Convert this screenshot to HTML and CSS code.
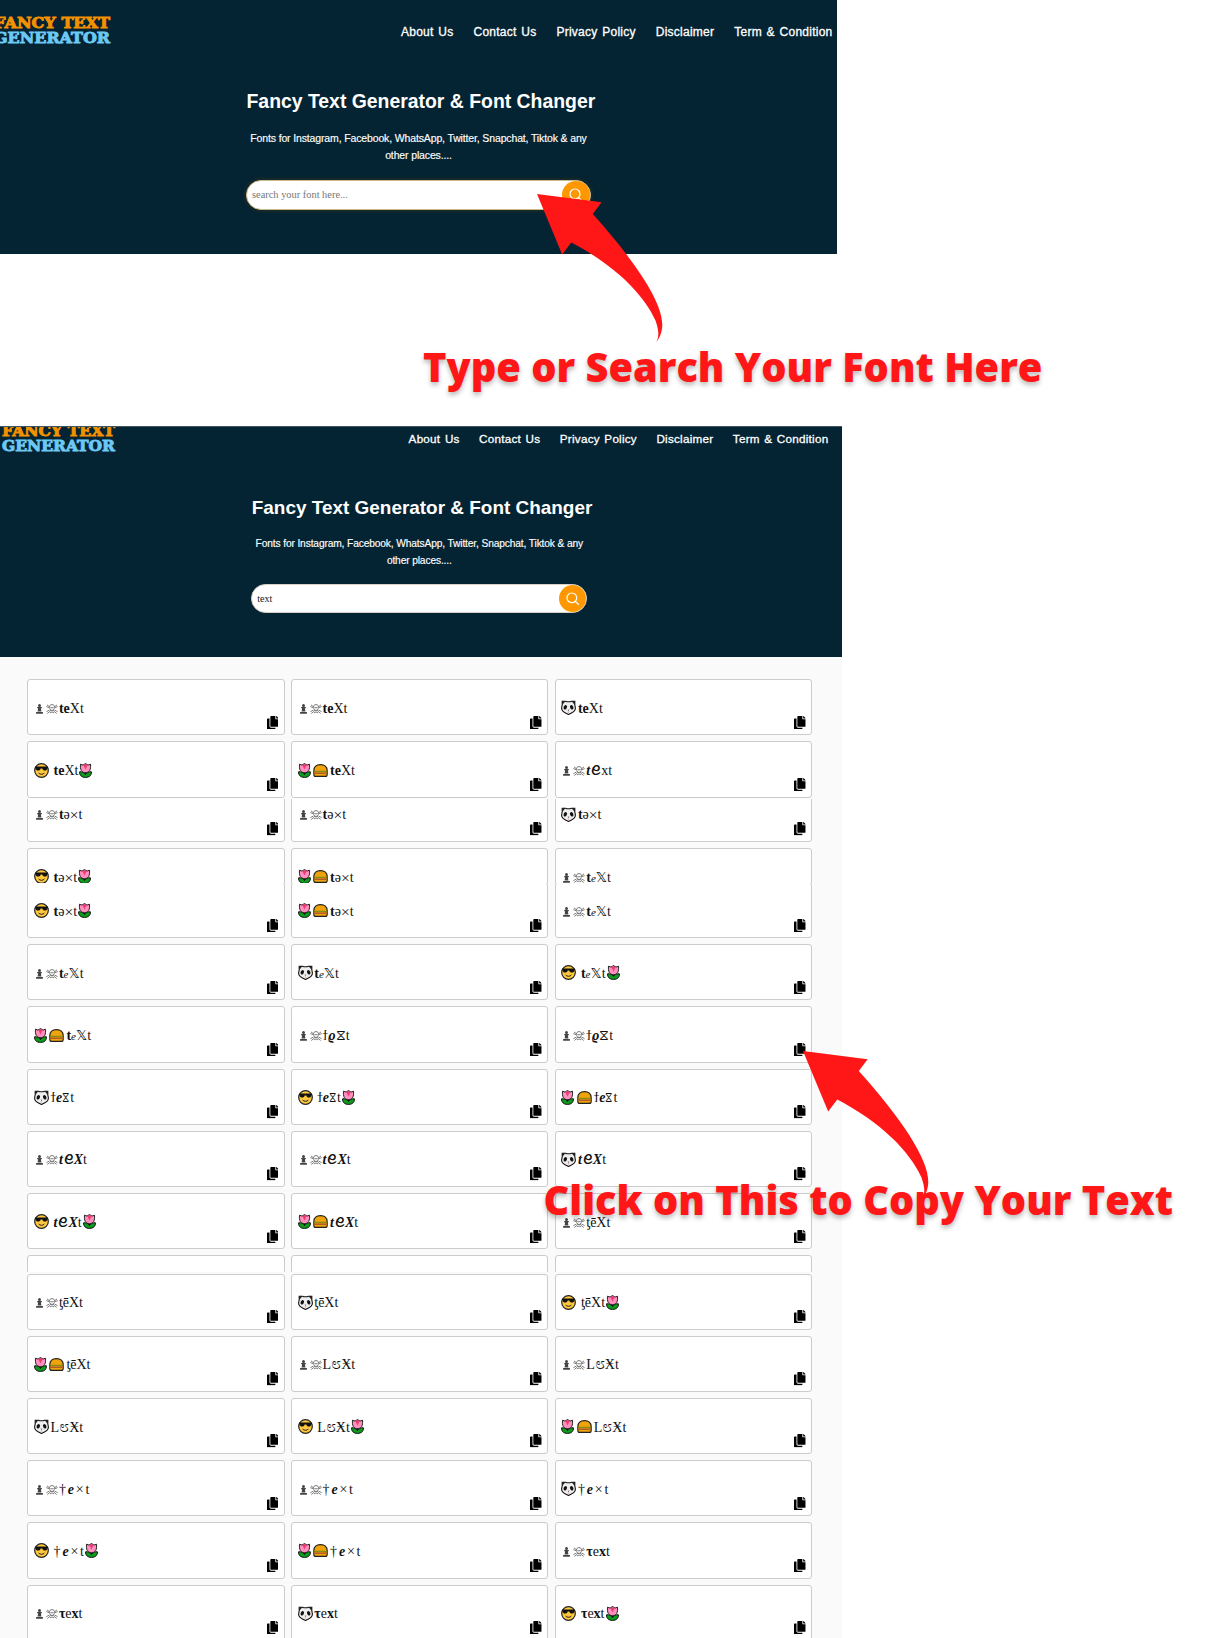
FILE: index.html
```html
<!DOCTYPE html>
<html lang="en">
<head>
<meta charset="utf-8">
<title>Fancy Text Generator &amp; Font Changer</title>
<link rel="stylesheet" href="styles.css">
</head>
<body>
<svg class="defs" aria-hidden="true">
  <symbol id="copy" viewBox="0 0 448 512"><path d="M320 448v40c0 13.255-10.745 24-24 24H24c-13.255 0-24-10.745-24-24V120c0-13.255 10.745-24 24-24h72v296c0 30.879 25.121 56 56 56h168zm0-344V0H152c-13.255 0-24 10.745-24 24v368c0 13.255 10.745 24 24 24h272c13.255 0 24-10.745 24-24V128H344c-13.2 0-24-10.8-24-24zm120.971-31.029L375.029 7.029A24 24 0 0 0 358.059 0H352v96h96v-6.059a24 24 0 0 0-7.029-16.97z"/></symbol>
  <symbol id="search" viewBox="0 0 14 14"><circle cx="6" cy="6" r="5" fill="none" stroke="#fff" stroke-width="1.2"/><path d="M9.7 9.7l3.4 3.4" stroke="#fff" stroke-width="1.300" stroke-linecap="round"/></symbol>
  <symbol id="cool" viewBox="0 0 15 15"><circle cx="7.5" cy="7.5" r="6.8" fill="#ffc83d" stroke="#222" stroke-width="1.200"/><path d="M1 3.500h13v1.200l-.6.6c-.3 1.600-1 2.300-2.400 2.300-1.600 0-2.300-.8-2.700-2.200H6.700C6.300 6.800 5.600 7.600 4 7.600c-1.400 0-2.100-.7-2.400-2.300L1 4.700z" fill="#111"/><path d="M4.600 10c1.400 1.700 4.400 1.700 5.800 0" fill="none" stroke="#222" stroke-width="1"/></symbol>
  <symbol id="tulip" viewBox="0 0 13 15"><path d="M6.500 8v6" stroke="#111" stroke-width="1.600"/><path d="M.6 8.800c2.500-.4 4.500.6 5.900 2.800 1.400-2.200 3.400-3.200 5.900-2.800.2 3.400-1.900 5.600-5.900 5.600s-6.100-2.200-5.900-5.600z" fill="#0c9c1c" stroke="#111" stroke-width="1"/><path d="M1.500 1.200l2.500.9L6.500.5 9 2.100l2.500-.9c.5 5.300-.9 8.500-5 8.500S1 6.500 1.500 1.200z" fill="#ff8fbe" stroke="#222" stroke-width="1"/><path d="M4.400 1.900L6.500.9l2.100 1L6.500 6.500z" fill="#f03a72"/></symbol>
  <symbol id="burger" viewBox="0 0 15 13"><path d="M.8 6.600C1 2.700 3.600.6 7.500.6s6.500 2.100 6.700 6v3.800c0 1.300-.6 2-1.900 2H2.700c-1.300 0-1.900-.7-1.900-2z" fill="#f0a30a" stroke="#222" stroke-width="1.100"/><path d="M1.300 7.300h12.400" stroke="#5c8a18" stroke-width=".9"/><path d="M1.300 9.200h12.400" stroke="#b05a28" stroke-width="1.500"/></symbol>
  <symbol id="panda" viewBox="0 0 15 15"><path d="M1.200 1.200h3.500l1 .5h3.600l1-.5h3.500v3.600l.6 3.200c0 2.700-2.700 4.500-4.400 5.300l-2.500 1.200-2.500-1.200C3.300 12.500.6 10.700.6 8l.6-3.200z" fill="#eee" stroke="#111" stroke-width="1.100"/><path d="M1 1h3.600L1.200 5zM14 1h-3.600l3.400 4z" fill="#222"/><ellipse cx="4.300" cy="7.300" rx="1.600" ry="2.300" transform="rotate(25 4.300 7.300)" fill="#111"/><ellipse cx="10.700" cy="7.300" rx="1.600" ry="2.300" transform="rotate(-25 10.700 7.300)" fill="#111"/><path d="M6.600 9.700h1.800l-.9 1.100z" fill="#111"/><path d="M6.800 12h1.400" stroke="#f48a8a" stroke-width=".9"/></symbol>
  <symbol id="pawn" viewBox="0 0 7 10"><circle cx="3.500" cy="1.600" r="1.500" fill="#444"/><path d="M1.200 3h4.600v1.200H4.900l.5 3.400H1.600l.5-3.400h-.9zM.1 7.900h6.800v1.900H.1z" fill="#444"/></symbol>
  <symbol id="skull" viewBox="0 0 12 10"><g fill="none" stroke="#666" stroke-width=".85"><path d="M3.400 3.400C3.400 1.500 4.400.6 6 .6s2.600.9 2.600 2.800c0 1-.5 1.500-1.100 1.900v1.200h-3V5.300c-.6-.4-1.100-.9-1.100-1.900zM1 .9l2.500 1.900M.3 2.600l2.900 1.100M11 .9L8.500 2.800M11.700 2.600l-2.900 1.100M3.600 5.900L.4 7.700M4.400 7L1.300 9.500M8.400 5.900l3.200 1.800M7.600 7l3.100 2.500M4 8.900l2-1 2 1"/><path d="M4.600 3.500h1M6.400 3.500h1M5.700 4.900h.6" stroke="#333"/></g></symbol>
  <symbol id="arrow" viewBox="0 0 128 150"><path d="M1 1L65.600 9.300 56.800 21.100C98 67 127 109 126.300 132.500 126 139 123.500 145.500 120.300 149 123.500 143 122.700 137 119.500 127.500 107 100 78 72 35.300 49.500L26.200 61.400z" fill="#ff1616"/></symbol>
</svg>

<div class="page">
  <section class="hero">
    <div class="hero-inner">
      <header class="topbar">
        <svg class="logo" width="117" height="30" viewBox="0 0 117 30"><text class="logo-a" x="0" y="12" textLength="116" lengthAdjust="spacingAndGlyphs">FANCY TEXT</text><text class="logo-b" x="0" y="27.300" textLength="116" lengthAdjust="spacingAndGlyphs">GENERATOR</text></svg>
        <nav class="nav"><a>About Us</a><a>Contact Us</a><a>Privacy Policy</a><a>Disclaimer</a><a>Term &amp; Condition</a></nav>
      </header>
      <h1 class="title">Fancy Text Generator &amp; Font Changer</h1>
      <p class="lead">Fonts for Instagram, Facebook, WhatsApp, Twitter, Snapchat, Tiktok &amp; any<br>other places....</p>
      <div class="search"><span class="placeholder">search your font here...</span><span class="go"><svg width="14" height="14"><use href="#search"/></svg></span></div>
    </div>
    <svg class="arrow" width="128" height="150"><use href="#arrow"/></svg>
  </section>

  <p class="note">Type or Search Your Font Here</p>

  <section class="hero hero-results">
    <div class="hero-inner">
      <header class="topbar">
        <svg class="logo" width="117" height="30" viewBox="0 0 117 30"><text class="logo-a" x="0" y="12" textLength="116" lengthAdjust="spacingAndGlyphs">FANCY TEXT</text><text class="logo-b" x="0" y="27.300" textLength="116" lengthAdjust="spacingAndGlyphs">GENERATOR</text></svg>
        <nav class="nav"><a>About Us</a><a>Contact Us</a><a>Privacy Policy</a><a>Disclaimer</a><a>Term &amp; Condition</a></nav>
      </header>
      <h1 class="title">Fancy Text Generator &amp; Font Changer</h1>
      <p class="lead">Fonts for Instagram, Facebook, WhatsApp, Twitter, Snapchat, Tiktok &amp; any<br>other places....</p>
      <div class="search"><span class="typed">text</span><span class="go"><svg width="14" height="14"><use href="#search"/></svg></span></div>
    </div>
  </section>

  <main class="results">
    <div class="strip strip-a"><div class="grid" data-cards="Aa Aa Pa Sa Ba Ac"></div></div>
    <div class="strip strip-b"><div class="grid" data-cards="Ab Ab Pb Sb Bb Ad"></div></div>
    <div class="strip strip-c"><div class="grid" data-cards="Sb Bb Ad Ad Pd Sd Bd Ae Ae Pk Sk Bk Af Af Pf Sf Bf Ag - - -"></div></div>
    <div class="strip strip-d"><div class="grid" data-cards="Ag Pg Sg Bg Ah Ah Ph Sh Bh Ai Ai Pi Si Bi Aj Aj Pj Sj"></div></div>
    <svg class="arrow arrow-copy" width="128" height="150"><use href="#arrow"/></svg>
    <p class="note note-copy">Click on This to Copy Your Text</p>
  </main>
</div>
<script src="cards.js"></script>
</body>
</html>
```
FILE: styles.css
```css
* { box-sizing: border-box; }
body { margin: 0; background: #fff; font-family: "Liberation Sans", Arial, sans-serif; }
.defs { position: absolute; width: 0; height: 0; }
.page { position: relative; width: 1209px; height: 1638px; overflow: hidden; display: flex; flex-direction: column; align-items: flex-start; }

.hero { position: relative; width: 837px; height: 254px; background: #052433; color: #fff; flex: none; }
.hero-inner { width: 837px; height: 254px; display: flex; flex-direction: column; }
.topbar { display: flex; justify-content: space-between; align-items: flex-start; height: 86px; padding: 15.500px 4.500px 0 0; }
.logo { margin-left: -6.500px; overflow: visible; flex: none; }
.logo text { font: bold 14.800px "DejaVu Serif", serif; stroke-width: .9px; }
.logo-a { fill: #f39200; stroke: #f39200; }
.logo-b { fill: #6cc9f5; stroke: #6cc9f5; }
.nav { display: flex; gap: 20px; padding-top: 9px; font-size: 12px; line-height: 14px; letter-spacing: .25px; word-spacing: 1.100px; white-space: nowrap; -webkit-text-stroke: .3px #fff; }
.title { margin: 0 0 0 246.500px; font-size: 19.400px; line-height: 30px; font-weight: bold; white-space: nowrap; }
.lead { margin: 13.500px 0 0; width: 837px; text-align: center; font-size: 10.500px; letter-spacing: -.14px; line-height: 17.300px; -webkit-text-stroke: .15px #fff; }
.search { margin: 15.500px 0 0 246px; width: 345px; height: 30px; border: 1px solid #cdb78c; border-radius: 15px; background: #fff; display: flex; align-items: center; justify-content: space-between; padding: 0 0 0 5px; font: 10.400px "Liberation Serif", serif; box-shadow: 0 0 4px rgba(70, 60, 10, .7); }
.placeholder { color: #777; }
.typed { color: #222; }
.go { width: 28px; height: 28px; border-radius: 50%; background: #ff9800; display: flex; align-items: center; justify-content: center; }

.hero-results { width: 842px; height: 231px; overflow: hidden; border-top: 1px solid #3e5563; }
.hero-results .hero-inner { zoom: .974; margin: -19px 0 0 12px; }
.hero-results .logo { margin-left: -10px; }
.hero-results .topbar { height: 86.500px; padding-right: 0; margin-right: -1.500px; }
.hero-results .title { font-size: 19.450px; }
.hero-results .lead { line-height: 17.600px; }
.hero-results .search { margin-top: 14.800px; border-color: #d8d0c4; box-shadow: none; }

.arrow { position: absolute; left: 536px; top: 193px; z-index: 2; }
.note { margin: 0; height: 172px; padding: 85px 0 0 423px; font: 800 39.750px/56px "Open Sans", sans-serif; color: #ff1616; text-shadow: 0 3px 5px rgba(0, 0, 0, .28); white-space: nowrap; flex: none; }

.results { position: relative; width: 842px; height: 981px; background: #fafafa; display: flex; flex-direction: column; flex: none; }
.strip { overflow: hidden; padding: 0 29.700px 0 27.200px; flex: none; }
.strip-a { height: 141.700px; padding-top: 22.300px; }
.strip-b { height: 84.500px; }
.strip-b .grid { margin-top: -12.800px; }
.strip-c { height: 389px; }
.strip-c .grid { margin-top: -1.100px; }
.strip-d { height: 366px; padding-top: 1.400px; }
.grid { display: grid; grid-template-columns: repeat(3, 257.500px); grid-auto-rows: 56.200px; gap: 6px 6.200px; }
.card { position: relative; background: #fff; border: 1px solid #ccc; border-radius: 3px; padding: 3px 0 0 5.700px; display: flex; align-items: center; font: 14px/14px "Liberation Serif", "DejaVu Sans", serif; color: #111; white-space: nowrap; }
.lead-in { display: flex; align-items: center; flex: none; }
.lead-pawn { width: 25px; padding-left: 2px; gap: 3px; }
.lead-panda { width: 16.700px; margin-top: -2px; }
.lead-cool { width: 19.700px; margin-top: -2px; }
.lead-burger { width: 32.500px; gap: 2.500px; margin-top: -2px; }
.tail { display: flex; margin: -2px 0 0 1px; }
.copy { position: absolute; right: 5.500px; bottom: 5.300px; width: 11.700px; height: 13.400px; }
.script { font-size: 11px; font-style: italic; }
.narrow { display: inline-block; transform: scaleX(.75); margin: 0 -1px; }
.wide { letter-spacing: 1.800px; }
.big { font-size: 18px; line-height: 0; }
.curl { display: inline-block; transform: scaleX(1.200); margin: 0 1px; font-size: 17px; line-height: 0; }
.cross { position: relative; top: 1px; font-size: 15.500px; line-height: 0; }

.arrow-copy { left: 802px; top: 392.500px; }
.note-copy { position: absolute; left: 543.500px; top: 514.500px; height: auto; padding: 0; z-index: 3; }
```
FILE: cards.js
```js
const icon = (name, w, h) => `<svg width="${w}" height="${h}"><use href="#${name}"/></svg>`;
const tulip = icon("tulip", 13, 15);

const leads = {
  A: `<span class="lead-in lead-pawn">${icon("pawn", 7, 10)}${icon("skull", 12, 10)}</span>`,
  P: `<span class="lead-in lead-panda">${icon("panda", 15, 15)}</span>`,
  S: `<span class="lead-in lead-cool">${icon("cool", 15, 15)}</span>`,
  B: `<span class="lead-in lead-burger">${tulip}${icon("burger", 15, 13)}</span>`
};

const styles = {
  a: "<b>te</b>Xt",
  b: "<b>t</b>ə<span class='cross'>×</span>t",
  c: "<b><i>t</i></b><span class='curl'>ꫀ</span>xt",
  d: "<b>t</b><span class='script'>e</span>𝕏t",
  e: "ϯ<b><i>ϱ</i></b>⧖t",
  k: "ϯ<b><i>e</i></b><span class='narrow'>⧖</span>t",
  f: "<b><i>t</i></b><span class='curl'>ꫀ</span><b><i>X</i></b>t",
  g: "ƫēXt",
  h: "L<span class='big'>೮</span>Ӿt",
  i: "<span class='wide'>†</span><b><i class='wide'>e</i></b><span class='wide'>×</span>t",
  j: "<b>τ</b>e<b>x</b>t"
};

document.querySelectorAll(".grid").forEach(grid => {
  grid.innerHTML = grid.dataset.cards.split(" ").map(([lead, style]) => {
    if (lead === "-") return '<div class="card"></div>';
    const tail = lead === "S" ? `<span class="tail">${tulip}</span>` : "";
    return `<div class="card">${leads[lead]}<span>${styles[style]}</span>${tail}<svg class="copy"><use href="#copy"/></svg></div>`;
  }).join("");
});
```
